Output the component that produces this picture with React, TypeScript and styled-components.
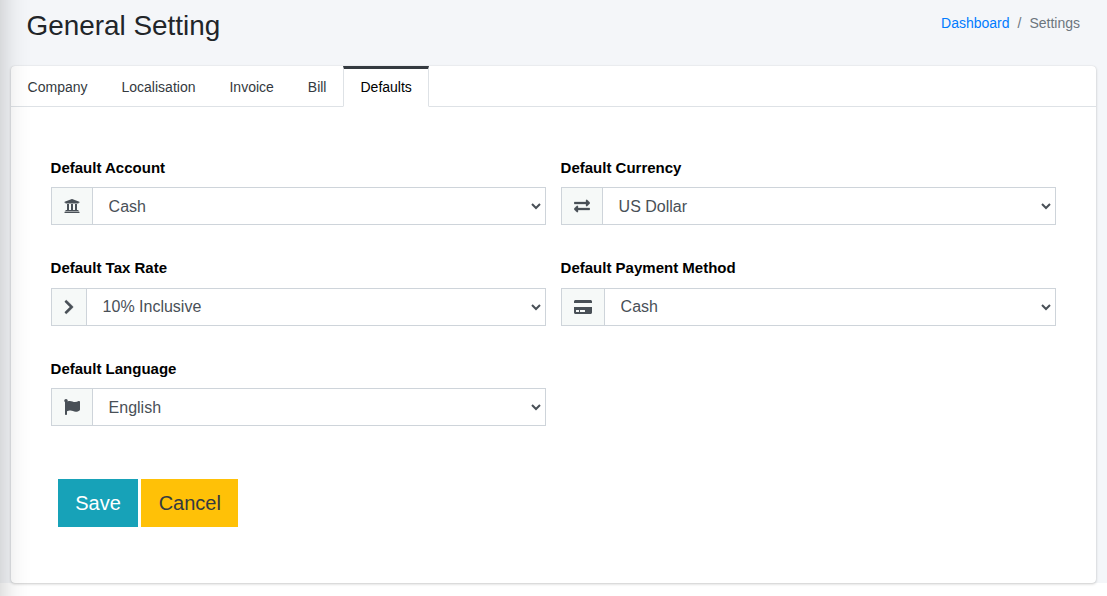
import React from "react";
import styled, { createGlobalStyle } from "styled-components";
import {
  FaUniversity,
  FaExchangeAlt,
  FaChevronRight,
  FaCreditCard,
  FaFlag,
} from "react-icons/fa";

const GlobalStyle = createGlobalStyle`
  *, *::before, *::after { box-sizing: border-box; }
  body {
    margin: 0;
    background: #fff;
    color: #212529;
    font-family: "Liberation Sans", Arial, sans-serif;
    font-size: 16px;
    line-height: 1.5;
    overflow: hidden;
  }
`;

const Page = styled.div`
  height: 596px;
`;

const SidebarShadow = styled.div`
  position: fixed;
  top: -100px;
  bottom: -100px;
  left: -250px;
  width: 250px;
  box-shadow: 0 14px 28px rgba(0, 0, 0, 0.23);
  pointer-events: none;
  z-index: 2;
`;

const Content = styled.main`
  height: 583px;
  padding: 0 11px 0 10.6px;
  background: #f4f6f9;
`;

const Header = styled.header`
  display: flex;
  justify-content: space-between;
  align-items: flex-start;
  height: 66px;
  padding: 8px 16px 0 15.9px;
`;

const Title = styled.h1`
  margin: 0;
  font-size: 27.9px;
  font-weight: 400;
  line-height: 36px;
`;

const Breadcrumb = styled.nav`
  display: flex;
  gap: 8px;
  padding-top: 5px;
  font-size: 14px;
  line-height: 21px;
  color: #6c757d;
`;

const Crumb = styled.a`
  color: #007bff;
  text-decoration: none;
`;

const Card = styled.section`
  height: 517px;
  background: #fff;
  border-radius: 4px;
  box-shadow: 0 0 1px rgba(0, 0, 0, 0.125), 0 1px 3px rgba(0, 0, 0, 0.2);
`;

const Tabs = styled.div`
  display: flex;
  height: 41px;
  border-bottom: 1px solid #dee2e6;
`;

const Tab = styled.a<{ $active?: boolean }>`
  height: 41px;
  padding: 8px 16px 0;
  border: 1px solid transparent;
  border-top: 3px solid ${(p) => (p.$active ? "#343a40" : "transparent")};
  border-left-color: ${(p) => (p.$active ? "#dee2e6" : "transparent")};
  border-right-color: ${(p) => (p.$active ? "#dee2e6" : "transparent")};
  background: ${(p) => (p.$active ? "#fff" : "transparent")};
  color: ${(p) => (p.$active ? "#000" : "#343a40")};
  font-size: 14px;
  line-height: 21px;
`;

const Form = styled.form`
  padding: 49.7px 40px 0;
`;

const Fields = styled.div`
  display: grid;
  grid-template-columns: 495px 495px;
  column-gap: 15px;
  grid-auto-rows: 100.5px;
`;

const Field = styled.div``;

const Label = styled.label`
  display: block;
  margin-bottom: 8px;
  color: #000;
  font-size: 15px;
  font-weight: 700;
  line-height: 22.5px;
`;

const InputGroup = styled.div`
  display: flex;
  height: 38px;
`;

const Addon = styled.span`
  display: flex;
  align-items: center;
  padding: 0 12px;
  border: 1px solid #ced4da;
  background: #f6f9f8;
  color: #495057;
`;

const AddonIcon = styled.span<{ $width: number; $bold?: boolean }>`
  display: flex;
  width: ${(p) => p.$width}px;

  svg {
    display: block;
    width: 100%;
    height: 16px;
    stroke-width: ${(p) => (p.$bold ? 10 : 0)};
  }
`;

const SelectBox = styled.div`
  display: flex;
  flex: 1;
  min-width: 0;
  height: 38px;
  margin-left: -1px;
  padding-right: 1px;
  border: 1px solid #ced4da;
  background: #fff;
`;

const Select = styled.select`
  flex: 1;
  min-width: 0;
  height: 36px;
  padding: 5px 12px;
  border: 0;
  border-radius: 0;
  background: #fff;
  color: #495057;
  font-family: inherit;
  font-size: 16px;
  line-height: 24px;
`;

const Actions = styled.div`
  display: flex;
  gap: 3px;
  padding: 21px 7.4px 0;
`;

const Button = styled.button<{ $variant: "info" | "warning" }>`
  height: 48px;
  padding: 0 0 0 ${(p) => (p.$variant === "info" ? 0 : 0.6)}px;
  width: ${(p) => (p.$variant === "info" ? 80 : 97)}px;
  border: 0;
  background: ${(p) => (p.$variant === "info" ? "#17a2b8" : "#ffc107")};
  color: ${(p) => (p.$variant === "info" ? "#fff" : "#343a40")};
  font-family: inherit;
  font-size: 20px;
  line-height: 30px;
`;

const tabs = ["Company", "Localisation", "Invoice", "Bill", "Defaults"];

const fields = [
  { label: "Default Account", value: "Cash", Icon: FaUniversity, width: 16 },
  { label: "Default Currency", value: "US Dollar", Icon: FaExchangeAlt, width: 16, bold: true },
  { label: "Default Tax Rate", value: "10% Inclusive", Icon: FaChevronRight, width: 10, bold: true },
  { label: "Default Payment Method", value: "Cash", Icon: FaCreditCard, width: 18 },
  { label: "Default Language", value: "English", Icon: FaFlag, width: 16 },
];

export default function App() {
  return (
    <Page>
      <GlobalStyle />
      <SidebarShadow />
      <Content>
        <Header>
          <Title>General Setting</Title>
          <Breadcrumb>
            <Crumb>Dashboard</Crumb>
            <span>/</span>
            <span>Settings</span>
          </Breadcrumb>
        </Header>
        <Card>
          <Tabs>
            {tabs.map((name) => (
              <Tab key={name} $active={name === "Defaults"}>
                {name}
              </Tab>
            ))}
          </Tabs>
          <Form>
            <Fields>
              {fields.map(({ label, value, Icon, width, bold }) => (
                <Field key={label}>
                  <Label>{label}</Label>
                  <InputGroup>
                    <Addon>
                      <AddonIcon $width={width} $bold={bold}>
                        <Icon />
                      </AddonIcon>
                    </Addon>
                    <SelectBox>
                      <Select defaultValue={value}>
                        <option>{value}</option>
                      </Select>
                    </SelectBox>
                  </InputGroup>
                </Field>
              ))}
            </Fields>
            <Actions>
              <Button type="button" $variant="info">Save</Button>
              <Button type="button" $variant="warning">Cancel</Button>
            </Actions>
          </Form>
        </Card>
      </Content>
    </Page>
  );
}
